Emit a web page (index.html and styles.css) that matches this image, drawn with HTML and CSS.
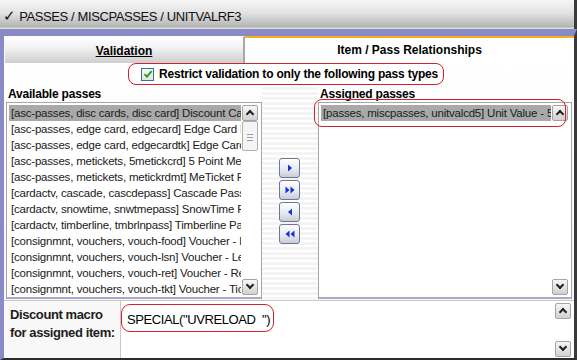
FILE: index.html
```html
<!DOCTYPE html>
<html lang="en">
<head>
    <meta charset="UTF-8">
    <title>Unit value pass</title>
    <link rel="stylesheet" href="styles.css">
</head>
<body>
<div class="window">
    <div class="titlebar"><span class="tick">&#10003;</span> PASSES / MISCPASSES / UNITVALRF3</div>

    <div class="frame">
        <div class="tabs">
            <div class="tab">Validation</div>
            <div class="tab active">Item / Pass Relationships</div>
        </div>

        <div class="panel">
            <div class="restrict">
                <label class="restrictBox">
                    <span class="check">
                        <svg width="10" height="10" viewBox="0 0 10 10"><path d="M1.5 5.2 L4 7.6 L8.6 2.2" fill="none" stroke="#1e9a1e" stroke-width="1.8"/></svg>
                    </span>
                    Restrict validation to only the following pass types
                </label>
            </div>

            <div class="lists">
                <div class="col">
                    <div class="colLabel">Available passes</div>
                    <div class="listbox">
                        <ul class="items">
                            <li class="selected">[asc-passes, disc cards, disc card] Discount Card</li>
                            <li>[asc-passes, edge card, edgecard] Edge Card Pass</li>
                            <li>[asc-passes, edge card, edgecardtk] Edge Card Ticket</li>
                            <li>[asc-passes, metickets, 5metickcrd] 5 Point MeTicket</li>
                            <li>[asc-passes, metickets, metickrdmt] MeTicket Redemption</li>
                            <li>[cardactv, cascade, cascdepass] Cascade Pass</li>
                            <li>[cardactv, snowtime, snwtmepass] SnowTime Pass</li>
                            <li>[cardactv, timberline, tmbrlnpass] Timberline Pass</li>
                            <li>[consignmnt, vouchers, vouch-food] Voucher - Food</li>
                            <li>[consignmnt, vouchers, vouch-lsn] Voucher - Lesson</li>
                            <li>[consignmnt, vouchers, vouch-ret] Voucher - Retail</li>
                            <li>[consignmnt, vouchers, vouch-tkt] Voucher - Ticket</li>
                        </ul>
                        <div class="scroll">
                            <span class="sbtn up"></span>
                            <span class="thumb"></span>
                            <span class="track"></span>
                            <span class="sbtn down"></span>
                        </div>
                    </div>
                </div>

                <div class="movers">
                    <button class="mover"><svg width="12" height="12" viewBox="0 0 12 12"><path d="M4 2.5 L8 6 L4 9.5 Z" fill="#1530d8"/></svg></button>
                    <button class="mover"><svg width="12" height="12" viewBox="0 0 12 12"><path d="M1.5 2.5 L5.5 6 L1.5 9.5 Z M6.5 2.5 L10.5 6 L6.5 9.5 Z" fill="#1530d8"/></svg></button>
                    <button class="mover"><svg width="12" height="12" viewBox="0 0 12 12"><path d="M8 2.5 L4 6 L8 9.5 Z" fill="#1530d8"/></svg></button>
                    <button class="mover"><svg width="12" height="12" viewBox="0 0 12 12"><path d="M5.5 2.5 L1.5 6 L5.5 9.5 Z M10.5 2.5 L6.5 6 L10.5 9.5 Z" fill="#1530d8"/></svg></button>
                </div>

                <div class="col">
                    <div class="colLabel">Assigned passes</div>
                    <div class="listbox assigned">
                        <ul class="items">
                            <li class="selected">[passes, miscpasses, unitvalcd5] Unit Value - 5 Point</li>
                        </ul>
                        <div class="scroll">
                            <span class="sbtn up"></span>
                            <span class="track"></span>
                            <span class="sbtn down"></span>
                        </div>
                        <span class="ring"></span>
                    </div>
                </div>
            </div>
        </div>

        <div class="macro">
            <div class="macroLabel">Discount macro<br>for assigned item:</div>
            <div class="macroBox">
                <div class="macroText"><span class="macroRing">SPECIAL("UVRELOAD &nbsp;")</span></div>
                <div class="scroll">
                    <span class="sbtn up"></span>
                    <span class="track"></span>
                    <span class="sbtn down"></span>
                </div>
            </div>
        </div>
    </div>
</div>
</body>
</html>
```

FILE: styles.css
```css
body{
    margin: 0;
    font-family: "Liberation Sans", Arial, sans-serif;
    font-size: 12px;
    color: #000;
    background: #fff;
}
.window{
    width: 577px;
    height: 360px;
    display: flex;
    flex-direction: column;
    overflow: hidden;
}
.titlebar{
    height: 29px;
    box-sizing: border-box;
    padding: 7px 0 0 3px;
    font-size: 13px;
    letter-spacing: -0.4px;
    color: #111;
    background: linear-gradient(#f6f6f6, #e2e2e2 45%, #b4b4b4 92%, #e8e8e8);
    border-right: 3px solid #3a3a3a;
    white-space: nowrap;
}
.tick{ font-size: 15px; letter-spacing: 0; }

.frame{
    flex: 1;
    display: flex;
    flex-direction: column;
    border-top: 7px solid #8a8ac6;
    border-left: 4px solid #8a8ac6;
    border-right: 3px solid #3a3a3a;
    border-bottom: 2px solid #2c2c2c;
    background: #f8f8f8;
    min-height: 0;
}

.tabs{
    display: flex;
    height: 27px;
    padding-left: 1px;
}
.tab{
    width: 240px;
    box-sizing: border-box;
    padding-top: 7px;
    text-align: center;
    font-weight: bold;
    text-decoration: underline;
    background: linear-gradient(#ffffff, #f2f2f2 40%, #cfcfcf);
    border-right: 2px solid #a8a8a8;
    border-top: 1px solid #fff;
}
.tab.active{
    flex: 1;
    padding-top: 5px;
    text-decoration: none;
    background: #fff;
    border-right: none;
    border-top: 2px solid #f2b21c;
}

.panel{
    display: flex;
    flex-direction: column;
    background: linear-gradient(#ffffff, #f6f6f6);
}
.restrict{
    display: flex;
    padding: 0 0 0 124px;
    height: 22px;
}
.restrictBox{
    display: flex;
    align-items: center;
    gap: 5px;
    height: 20px;
    padding: 0 5px 0 12px;
    border: 1px solid #d22030;
    border-radius: 8px;
    font-weight: bold;
    letter-spacing: -0.2px;
}
.check{
    width: 11px;
    height: 11px;
    border: 1px solid #3c6ca0;
    background: linear-gradient(#f4f8f0, #dfe9d8);
    display: flex;
    align-items: center;
    justify-content: center;
}

.lists{
    display: grid;
    grid-template-columns: 256px 56px 254px;
    padding: 2px 0 0 2px;
}
.col{ display: flex; flex-direction: column; }
.colLabel{
    font-weight: bold;
    height: 15px;
    padding-left: 2px;
    letter-spacing: -0.2px;
}
.listbox{
    position: relative;
    height: 197px;
    box-sizing: border-box;
    display: flex;
    background: #fff;
    border: 1px solid #a6a6a6;
    border-bottom: 2px solid #a8a8c8;
    padding: 2px;
}
.items{
    list-style-type: none;
    margin: 0;
    padding: 0;
    flex: 1;
    min-width: 0;
    overflow: hidden;
}
.items > li{
    height: 16px;
    line-height: 16px;
    padding-left: 2px;
    font-size: 11.5px;
    letter-spacing: -0.2px;
    white-space: nowrap;
    overflow: hidden;
    color: #202020;
}
.items > li.selected{ background: #a9a9a9; }

.scroll{
    width: 17px;
    display: flex;
    flex-direction: column;
    margin-left: 1px;
}
.sbtn{
    width: 16px;
    height: 16px;
    box-sizing: border-box;
    border: 1px solid #a4a4a4;
    border-radius: 2px;
    background: linear-gradient(#f8f8f8, #d0d0d0);
    display: flex;
    align-items: center;
    justify-content: center;
}
.sbtn::after{
    content: "";
    width: 4px;
    height: 4px;
    border-left: 2px solid #222;
    border-top: 2px solid #222;
    transform: translateY(1px) rotate(45deg);
}
.sbtn.down::after{ transform: translateY(-2px) rotate(225deg); }
.thumb{
    width: 16px;
    height: 30px;
    box-sizing: border-box;
    border: 1px solid #b0b0b0;
    border-radius: 2px;
    background: repeating-linear-gradient(#f8f8f8 0 2px, #9a9a9a 2px 3px) , #f4f4f4;
    background-size: 6px 9px;
    background-repeat: no-repeat;
    background-position: center 10px;
}
.track{ flex: 1; }

.movers{
    display: flex;
    flex-direction: column;
    gap: 2px;
    padding: 71px 0 0 17px;
    background: repeating-linear-gradient(#f4f4f4 0 3px, #ffffff 3px 5px);
}
.mover{
    width: 21px;
    height: 20px;
    padding: 0;
    border: 1px solid #6c7894;
    border-radius: 3px;
    background: linear-gradient(#ffffff, #e4e8ee 60%, #c8ccd6);
    display: flex;
    align-items: center;
    justify-content: center;
}

.ring{
    position: absolute;
    left: -5px;
    top: -4px;
    width: 250px;
    height: 26px;
    border: 1px solid #d22030;
    border-radius: 8px;
}

.macro{
    flex: 1;
    display: flex;
    margin-top: 1px;
    border-top: 1px solid #c8c8c8;
}
.macroLabel{
    width: 110px;
    padding: 5px 0 0 6px;
    font-size: 13px;
    font-weight: bold;
    line-height: 18px;
    letter-spacing: -0.4px;
    white-space: nowrap;
    color: #202020;
}
.macroBox{
    flex: 1;
    display: flex;
    background: #fff;
    border-left: 1px solid #c8c8c8;
    padding: 2px 1px 1px 0;
}
.macroText{ flex: 1; }
.macroRing{
    display: inline-block;
    width: 153px;
    height: 28px;
    box-sizing: border-box;
    padding: 7px 0 0 5px;
    border: 1px solid #d22030;
    border-radius: 9px;
    font-size: 13px;
    letter-spacing: -0.4px;
    white-space: nowrap;
    margin-top: 1px;
}
.macroBox .scroll{ margin-right: 1px; }
```
